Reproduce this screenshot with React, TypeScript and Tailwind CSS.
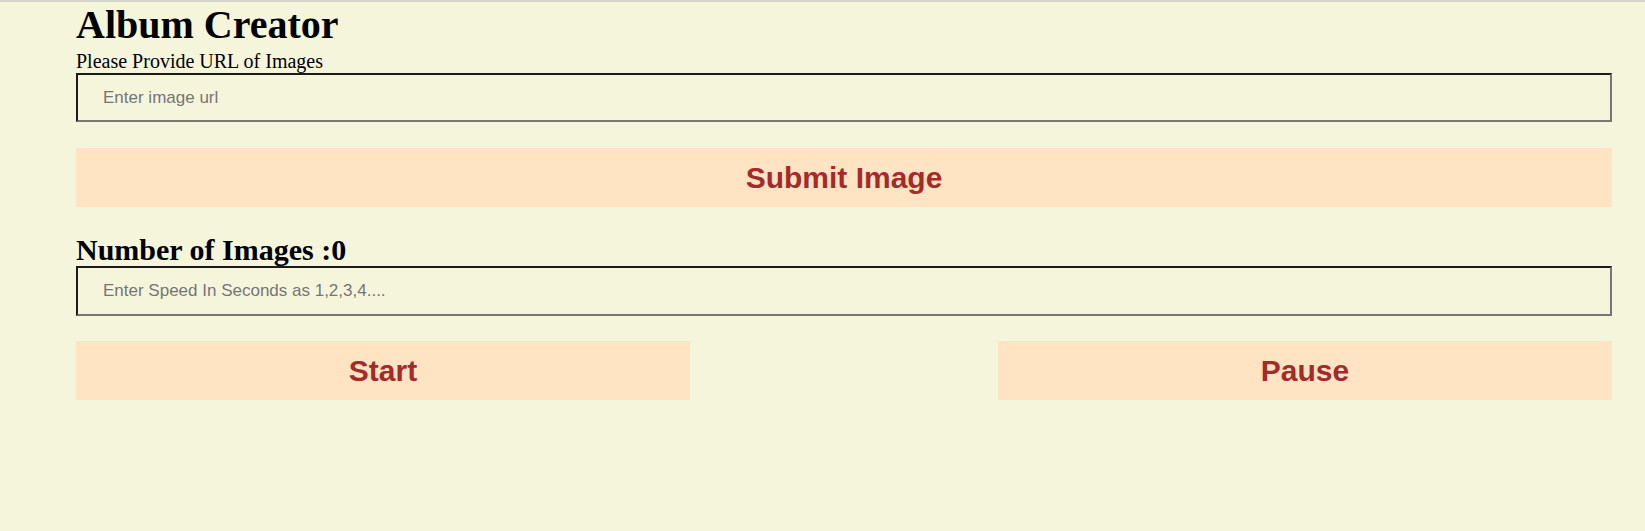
import React from "react";

export default function App() {
  return (
    <div className="w-[1645px] h-[531px] bg-[#f5f5dc] border-t-2 border-[#d3d3d3] overflow-hidden">
      <div className="ml-[76px] w-[1536px] flex flex-col">
        <h1 className="m-0 text-[40px] leading-[46px] font-bold text-black font-['Liberation_Serif','Times_New_Roman',serif]">
          Album Creator
        </h1>
        <div className="pt-[2px] text-[20px] leading-[23px] text-black font-['Liberation_Serif','Times_New_Roman',serif]">
          Please Provide URL of Images
        </div>
        <input
          type="text"
          placeholder="Enter image url"
          className="h-[49px] w-full bg-transparent border-2 border-solid border-t-[#1b1b1b] border-l-[#1b1b1b] border-b-[#767676] border-r-[#767676] pl-[25px] text-[17px] font-['Liberation_Sans',Arial,sans-serif] text-black placeholder:text-[#757575] outline-none"
        />
        <button className="mt-[26px] h-[59px] w-full bg-[#ffe4c4] text-[#a52a2a] text-[30px] font-bold font-['Liberation_Sans',Arial,sans-serif]">
          Submit Image
        </button>
        <h2 className="mt-[26px] m-0 text-[30px] leading-[33px] font-bold text-black font-['Liberation_Serif','Times_New_Roman',serif]">
          Number of Images :0
        </h2>
        <input
          type="text"
          placeholder="Enter Speed In Seconds as 1,2,3,4...."
          className="h-[50px] w-full bg-transparent border-2 border-solid border-t-[#1b1b1b] border-l-[#1b1b1b] border-b-[#767676] border-r-[#767676] pl-[25px] text-[17px] font-['Liberation_Sans',Arial,sans-serif] text-black placeholder:text-[#757575] outline-none"
        />
        <div className="mt-[25px] flex justify-between">
          <button className="h-[59px] w-[614px] bg-[#ffe4c4] text-[#a52a2a] text-[30px] font-bold font-['Liberation_Sans',Arial,sans-serif]">
            Start
          </button>
          <button className="h-[59px] w-[614px] bg-[#ffe4c4] text-[#a52a2a] text-[30px] font-bold font-['Liberation_Sans',Arial,sans-serif]">
            Pause
          </button>
        </div>
      </div>
    </div>
  );
}
